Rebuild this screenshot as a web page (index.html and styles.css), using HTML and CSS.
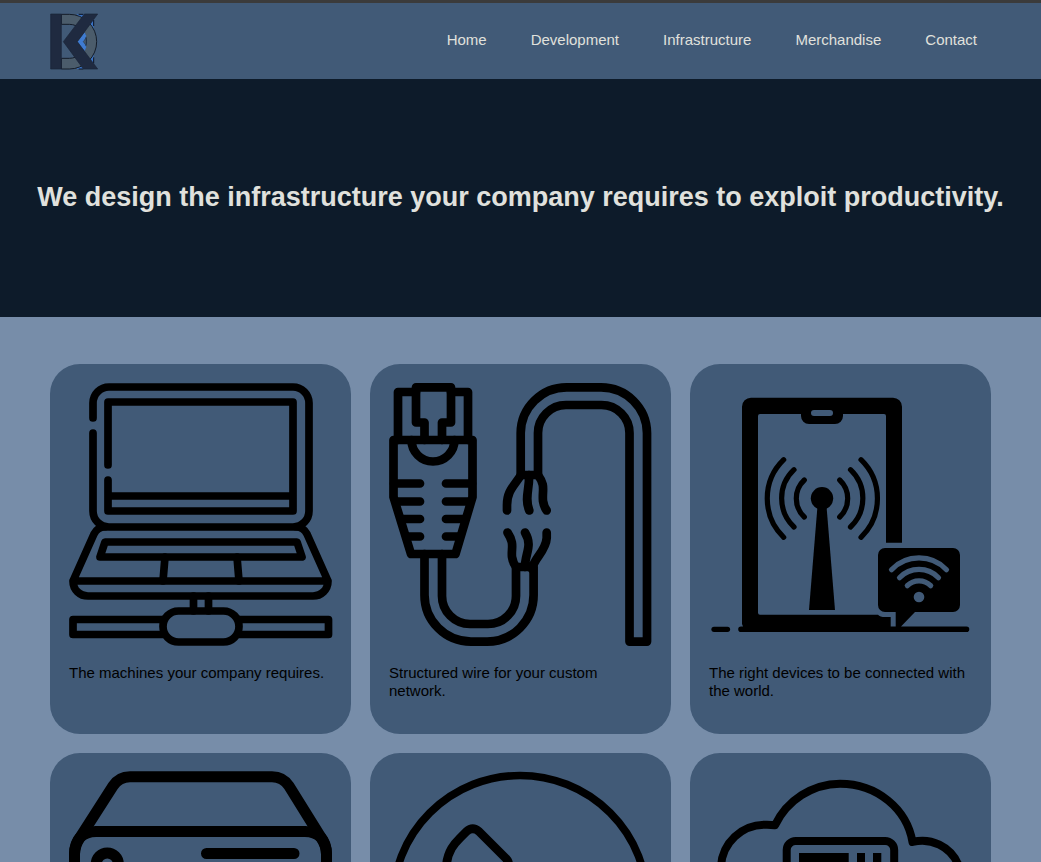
FILE: index.html
```html
<!DOCTYPE html>
<html lang="en">
<head>
<meta charset="utf-8">
<meta name="viewport" content="width=device-width, initial-scale=1">
<title>Infrastructure</title>
<link rel="stylesheet" href="styles.css">
</head>
<body>
<header class="site-header">
  <a class="logo" href="#" aria-label="Home page">
    <svg class="logo-mark" viewBox="150 39 144 171" aria-hidden="true">
      <path d="M230 43H281V207H230L262 160V90Z" fill="#3a73c4"/>
      <path d="M281 60V78M281 172V190M236 43H250M236 207H250" stroke="#0b1220" stroke-width="3"/>
      <path d="M184 43H208A82 82 0 0 1 208 207H184V175H208A50 50 0 0 0 208 73H184Z" fill="#4b5c6b" stroke="#141c28" stroke-width="3"/>
      <path d="M232 125L254 97L259 108L250 125L259 141L254 153Z" fill="#3f7bd0"/>
      <path d="M250 125L258 115V135Z" fill="#4b5c6b" stroke="#27405f" stroke-width="2"/>
      <path d="M152 42H184V207H152ZM253 42H293L232 125L293 207H250L190 125Z" fill="#1f2a40" stroke="#1a2438" stroke-width="2"/>
    </svg>
  </a>
  <nav class="site-nav" aria-label="Main">
    <a href="#">Home</a>
    <a href="#">Development</a>
    <a href="#">Infrastructure</a>
    <a href="#">Merchandise</a>
    <a href="#">Contact</a>
  </nav>
</header>

<section class="hero">
  <h1>We design the infrastructure your company requires to exploit productivity.</h1>
</section>

<main class="cards">
  <article class="card">
    <svg class="card-icon" viewBox="0 0 263 263" stroke-width="7.7" aria-hidden="true">
      <path d="M24 35V20a16 16 0 0 1 16-16H224a16 16 0 0 1 16 16V128a16 16 0 0 1-16 16H40a16 16 0 0 1-16-16V50"/>
      <path d="M39 82V19H224V128H39V97M39 113H224"/>
      <path d="M36 144C31 144 27 147 25 151L4 198C4 207 11 213 19 213H244C252 213 259 207 259 198L238 151C236 147 232 144 227 144M4 198H259"/>
      <path d="M36 159H228L233 174H31Z"/>
      <path d="M96 174L94 198M168 174L170 198M124.500 213V228M139.500 213V228"/>
      <rect x="94" y="228" width="76" height="31" rx="15.500"/>
      <path d="M94 236.500H4V251.500H94M170 236.500H259.500V251.500H170"/>
    </svg>
    <p>The machines your company requires.</p>
  </article>

  <article class="card">
    <svg class="card-icon" viewBox="0 0 263 263" stroke-width="8.700" aria-hidden="true">
      <path d="M9 57V9H27M62 9H79V57"/>
      <path d="M35.500 57V39.500H27V4.400H62V39.500H53V57"/>
      <path d="M4.500 57H83.500V114L66.500 171H22L4.500 114Z"/>
      <path d="M22.500 57A21.500 21.500 0 0 0 65.500 57"/>
      <path d="M5 100.500H31M8 118.500H31M13 136H31M18 153.500H31M57 100.500H83M57 118.500H80M57 136H75M57 153.500H70"/>
      <path d="M35.500 171V212A46.500 46.500 0 0 0 82 258.600H98A46.500 46.500 0 0 0 144.600 212V184H127V213A28 28 0 0 1 99 241H81A28 28 0 0 1 53 213V171"/>
      <path d="M118.500 149.500C126 161 122 165 123 174Q124 180 127 184M136 149.500C144 163 136 170 136 184M157.700 149.500V155C157 168 145 175 143 186"/>
      <path d="M149 92V50A28 28 0 0 1 177 22H212.500A28 28 0 0 1 240.500 50V258.600H258V50A46 46 0 0 0 212 4.400H178A46 46 0 0 0 131.700 50V92Z"/>
      <path d="M132 92C125 103 118 108 118 122V127.500M140 92C141 105 135 115 140.300 127.500M149 92C157 103 153 107 154 118Q155 124 157.700 127.500"/>
    </svg>
    <p>Structured wire for your custom network.</p>
  </article>

  <article class="card">
    <svg class="card-icon" viewBox="0 0 263 263" stroke-width="5.200" aria-hidden="true">
      <path class="solid" fill-rule="evenodd" d="M42 14.700H184a9 9 0 0 1 9 9V159.700H177V33a2 2 0 0 0-2-2H134V33a8 8 0 0 1-8 8H100a8 8 0 0 1-8-8V31H51a2 2 0 0 0-2 2V229.700a2 2 0 0 0 2 2H169Q171 234 176 234H181.700V243.500H186.700V229H176a7 7 0 0 1-7-7V172a7 7 0 0 1 7-7H244a7 7 0 0 1 7 7V222a7 7 0 0 1-7 7H206L192 243.500H257.500a2.800 2.800 0 0 1 0 5.600H32a2.800 2.800 0 0 1 0-5.600H34L33 241V23.700a9 9 0 0 1 9-9ZM105 27a3 3 0 0 0 0 6H121a3 3 0 0 0 0-6Z"/>
      <path class="solid" d="M108.500 123H117.500L126 227H100Z"/>
      <circle class="solid" cx="113" cy="115.300" r="11.200"/>
      <path d="M5 246.300H18.500"/>
      <path d="M95.300 97A25.400 25.400 0 0 0 95.300 134M85 86.700A39.400 39.400 0 0 0 85 144M74.700 76.700A54 54 0 0 0 74.700 154.300M130.700 97A25.400 25.400 0 0 1 130.700 134M141.500 86.700A39.400 39.400 0 0 1 141.500 144M152 76.700A54 54 0 0 1 152 154.300"/>
      <path class="knockout" d="M182.500 186.700A38 38 0 0 1 237.500 186.700M190.500 194.700A27 27 0 0 1 229.500 194.700M198.300 202.700A16.500 16.500 0 0 1 221.700 202.700"/>
      <circle class="knockout-dot" cx="210" cy="214" r="5.300"/>
    </svg>
    <p>The right devices to be connected with the world.</p>
  </article>

  <article class="card">
    <svg class="card-icon" viewBox="0 0 263 263" stroke-width="11" aria-hidden="true">
      <path d="M5.500 106V82Q5.500 74 11 65.500L44 14Q50 4.700 61 4.700H203Q214 4.700 220 14L252 65.500Q257.500 74 257.500 82V106"/>
      <path d="M5.500 82Q6 60 27 59.500H236Q257 60 257.500 82"/>
      <path d="M5.500 100Q6 124 27 124.500H236Q257 124 257.500 100"/>
      <rect x="5.500" y="124.500" width="252" height="65" rx="21"/>
      <circle cx="38.300" cy="92" r="11"/>
      <circle cx="38.300" cy="157" r="11"/>
      <path d="M137.500 81.500H225M137.500 146.500H225M131.500 189V257M60 257H203"/>
    </svg>
  </article>

  <article class="card">
    <svg class="card-icon" viewBox="0 0 263 263" stroke-width="7.700" aria-hidden="true">
      <circle cx="131" cy="131" r="127.500"/>
      <path stroke-width="8.700" d="M57.500 92C59 79 65 72 71 66L77.500 59.500Q83.700 54 90 59.500L117 86.500Q122 92 117 99L107 109Q113 137 153 155L165 145Q171 141 177 146L203 172Q208 178 203 184L192 195C165 215 50 160 57.500 92Z"/>
    </svg>
  </article>

  <article class="card">
    <svg class="card-icon" viewBox="0 0 263 263" stroke-width="8" aria-hidden="true">
      <path d="M12 94A44 44 0 0 1 56 52.700Q61 52.500 66 53.300A73 73 0 0 1 131 11.700C168 11.700 198 37 203.500 70A39 39 0 0 1 249 92C270 125 250 160 213 160H50C15 158 0 125 12 94Z"/>
      <rect x="77.700" y="69" width="107.500" height="66" rx="9"/>
      <path class="solid" d="M90 81H139.700V91H90ZM148 81H156V91H148ZM164 81H172.300V91H164Z"/>
      <path d="M131 160V240M50 240H213"/>
    </svg>
  </article>
</main>
</body>
</html>
```

FILE: styles.css
```css
:root {
  --ink: #0d1b2a;
  --panel: #415a77;
  --mist: #778da9;
  --light: #e0e1dd;
  --gutter: 50px;
}

* {
  box-sizing: border-box;
}

html {
  scrollbar-width: none;
}

body {
  margin: 0;
  background: var(--mist);
  color: #000;
  font-family: "Liberation Sans", Arial, sans-serif;
  font-size: 15px;
  line-height: 18px;
}

.site-header {
  display: flex;
  align-items: center;
  justify-content: space-between;
  padding: 10px 64px 9px var(--gutter);
  border-top: 3px solid #3b3b3b;
  background: var(--panel);
}

.logo,
.logo-mark {
  display: block;
}

.logo-mark {
  width: 48px;
  height: 57px;
}

.site-nav {
  display: flex;
  gap: 44px;
  padding-bottom: 4px;
}

.site-nav a {
  color: var(--light);
  text-decoration: none;
}

.hero {
  padding: 100px 20px 102px;
  background: var(--ink);
  color: var(--light);
  text-align: center;
}

.hero h1 {
  margin: 0;
  font-size: 27px;
  line-height: 36px;
}

.cards {
  display: grid;
  grid-template-columns: repeat(3, 1fr);
  gap: 19px;
  padding: 47px var(--gutter);
}

.card {
  padding: 19px 19px 34px;
  border-radius: 30px;
  background: var(--panel);
}

.card p {
  min-height: 36px;
  margin: 18px 0 0;
}

.card-icon {
  display: block;
  width: 100%;
  overflow: visible;
  fill: none;
  stroke: #000;
  stroke-linecap: round;
  stroke-linejoin: round;
}

.solid {
  fill: #000;
  stroke: none;
}

.knockout {
  stroke: var(--panel);
}

.knockout-dot {
  fill: var(--panel);
  stroke: none;
}
```
